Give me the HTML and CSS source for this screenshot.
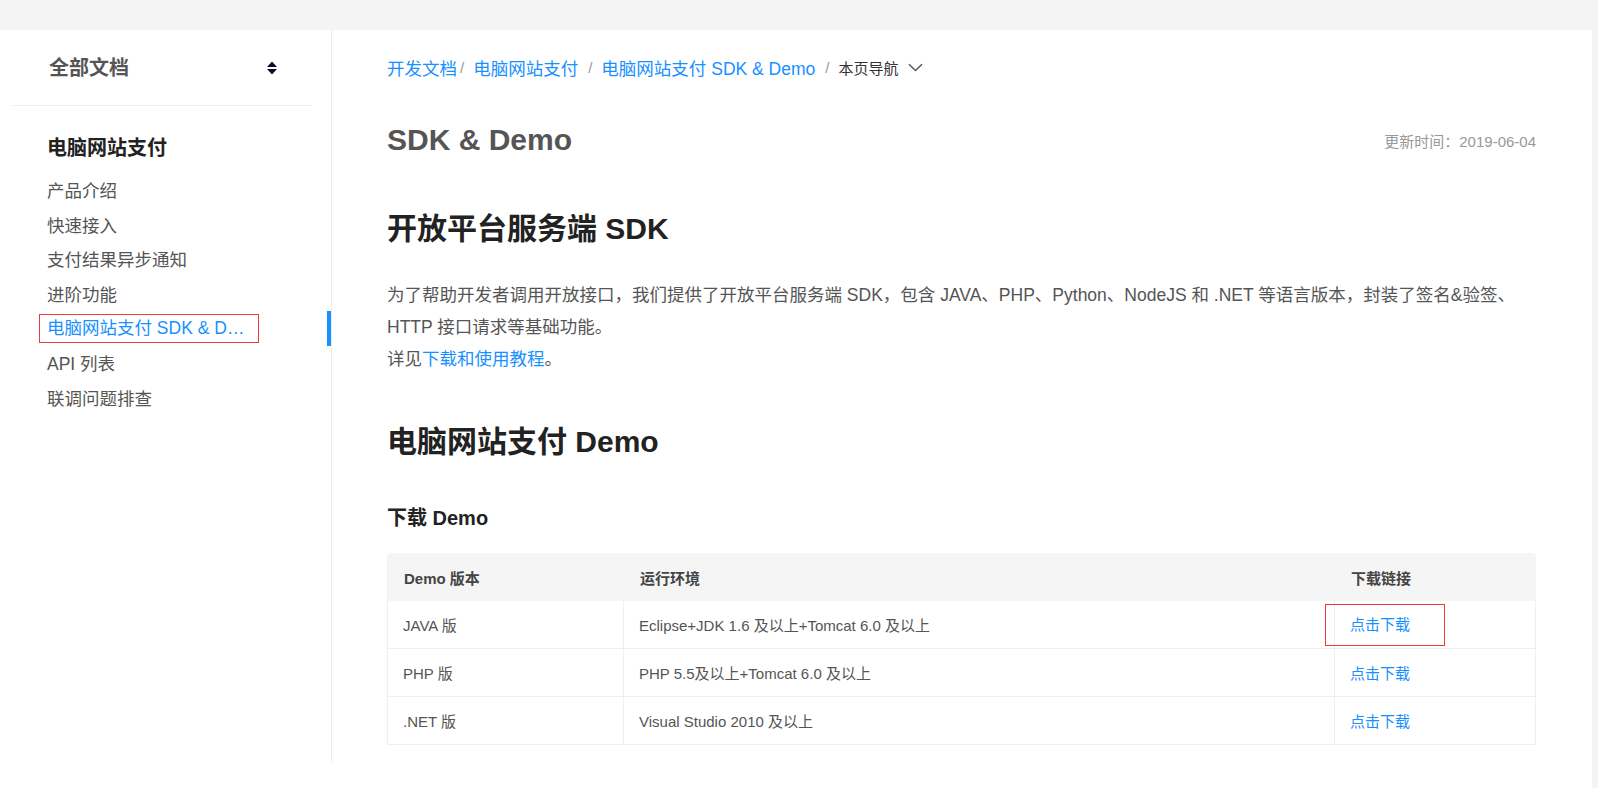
FILE: index.html
```html
<!DOCTYPE html>
<html lang="zh-CN">
<head>
<meta charset="utf-8">
<title>SDK &amp; Demo</title>
<link rel="stylesheet" href="styles.css">
</head>
<body>
<div class="page">
  <aside class="sidebar">
    <div class="side-head">
      <span class="side-head-title">全部文档</span>
      <svg class="sort-icon" width="10" height="14" viewBox="0 0 10 14"><polygon points="0,6 5,0.5 10,6" fill="#0d0d26"/><polygon points="0,8 10,8 5,13.5" fill="#0d0d26"/></svg>
    </div>
    <nav class="side-nav">
      <div class="side-group">电脑网站支付</div>
      <a class="side-item">产品介绍</a>
      <a class="side-item">快速接入</a>
      <a class="side-item">支付结果异步通知</a>
      <a class="side-item">进阶功能</a>
      <a class="side-item active"><span class="active-text">电脑网站支付 SDK &amp; Demo</span></a>
      <a class="side-item">API 列表</a>
      <a class="side-item">联调问题排查</a>
    </nav>
  </aside>
  <main class="content">
    <div class="crumbs">
      <a class="crumb-link">开发文档</a><span class="sep sep-first">/</span>
      <a class="crumb-link">电脑网站支付</a><span class="sep">/</span>
      <a class="crumb-link">电脑网站支付 SDK &amp; Demo</a><span class="sep">/</span>
      <span class="crumb-nav">本页导航</span>
      <svg class="chev" width="15" height="9" viewBox="0 0 15 9"><polyline points="1,1.2 7.5,7.6 14,1.2" fill="none" stroke="#555" stroke-width="1.4"/></svg>
    </div>
    <div class="title-row">
      <h1 class="page-title">SDK &amp; Demo</h1>
      <span class="updated">更新时间：2019-06-04</span>
    </div>
    <h2 class="sec-title first">开放平台服务端 SDK</h2>
    <p class="para">为了帮助开发者调用开放接口，我们提供了开放平台服务端 SDK，包含 JAVA、PHP、Python、NodeJS 和 .NET 等语言版本，封装了签名&amp;验签、HTTP 接口请求等基础功能。<br>详见<a class="link">下载和使用教程</a>。</p>
    <h2 class="sec-title second">电脑网站支付 Demo</h2>
    <h3 class="sub-title">下载 Demo</h3>
    <table class="demo-table">
      <thead>
        <tr><th class="c1">Demo 版本</th><th class="c2">运行环境</th><th class="c3">下载链接</th></tr>
      </thead>
      <tbody>
        <tr><td>JAVA 版</td><td>Eclipse+JDK 1.6 及以上+Tomcat 6.0 及以上</td><td><span class="annot"><a class="link">点击下载</a></span></td></tr>
        <tr><td>PHP 版</td><td>PHP 5.5及以上+Tomcat 6.0 及以上</td><td><a class="link">点击下载</a></td></tr>
        <tr><td>.NET 版</td><td>Visual Studio 2010 及以上</td><td><a class="link">点击下载</a></td></tr>
      </tbody>
    </table>
  </main>
</div>
</body>
</html>
```

FILE: styles.css
```css
* { box-sizing: border-box; }
html, body { margin: 0; padding: 0; }
body {
  background: #f4f4f4;
  font-family: "Liberation Sans", "Noto Sans CJK SC", sans-serif;
  color: #555;
  padding: 30px 6px 0 0;
  min-height: 788px;
}
.page {
  display: flex;
  align-items: flex-start;
  background: #fff;
  min-height: 758px;
}
.sidebar {
  width: 332px;
  flex: 0 0 332px;
  height: 732px;
  border-right: 1px solid #ececec;
}
.side-head {
  margin: 0 19px 0 12px;
  height: 76px;
  padding: 1px 35px 0 37px;
  border-bottom: 1px solid #efefef;
  display: flex;
  align-items: center;
  justify-content: space-between;
}
.side-head-title {
  font-size: 20px;
  font-weight: bold;
  color: #555;
  line-height: 28px;
}
.sort-icon { display: block; margin-top: -1px; }
.side-nav {
  padding-top: 27px;
  display: flex;
  flex-direction: column;
}
.side-group {
  padding-left: 47px;
  font-size: 20px;
  font-weight: bold;
  color: #222;
  line-height: 30px;
  margin-bottom: 9px;
}
.side-item {
  position: relative;
  display: flex;
  align-items: center;
  height: 34.7px;
  padding-left: 47px;
  font-size: 17.5px;
  color: #555;
  white-space: nowrap;
}
.side-item.active { color: #1890ff; }
.side-item.active::after {
  content: "";
  position: absolute;
  right: 0;
  top: 0;
  width: 4px;
  height: 35px;
  background: #1890ff;
}
.active-text {
  display: block;
  margin-left: -8px;
  width: 220px;
  height: 29px;
  line-height: 27px;
  padding: 0 12px 0 7px;
  border: 1px solid #ef3a3a;
  overflow: hidden;
  text-overflow: ellipsis;
  white-space: nowrap;
}
.content {
  flex: 1;
  padding: 25px 56px 40px 55px;
}
.crumbs {
  display: flex;
  align-items: center;
  height: 24px;
  font-size: 17.5px;
  white-space: nowrap;
}
.crumb-link { color: #1890ff; }
.sep { color: #999; margin: 0 9px 0 10px; font-size: 15px; }
.sep-first { margin-left: 3px; margin-right: 9px; }
.crumb-nav { font-size: 15px; color: #333; }
.chev { margin-left: 10px; margin-top: 1px; }
.title-row {
  margin-top: 41px;
  height: 40px;
  display: flex;
  align-items: center;
  justify-content: space-between;
}
.page-title {
  margin: 0;
  font-size: 30px;
  line-height: 40px;
  font-weight: bold;
  color: #555;
}
.updated { font-size: 15px; color: #999; }
.sec-title {
  margin: 0;
  font-size: 30px;
  line-height: 40px;
  font-weight: bold;
  color: #222;
}
.sec-title.first { margin-top: 49px; }
.sec-title.second { margin-top: 47px; }
.para {
  margin: 30px 0 0;
  font-size: 17.5px;
  line-height: 32px;
  color: #555;
}
.link { color: #1890ff; text-decoration: none; }
.sub-title {
  margin: 42px 0 0;
  font-size: 20px;
  line-height: 28px;
  font-weight: bold;
  color: #222;
}
.demo-table {
  margin-top: 21px;
  width: 100%;
  border-collapse: separate;
  border-spacing: 0;
  font-size: 15px;
  table-layout: fixed;
}
.demo-table th {
  height: 48px;
  background: #f5f5f5;
  text-align: left;
  font-weight: bold;
  color: #444;
  padding: 0 0 0 16px;
  border-left: 1px solid transparent;
}
.demo-table th.c1 { width: 236px; border-top-left-radius: 4px; }
.demo-table th.c2 { width: 711px; }
.demo-table th.c3 { border-top-right-radius: 4px; }
.demo-table td {
  height: 48px;
  padding: 0 0 0 15px;
  color: #555;
  border-left: 1px solid #efefef;
  border-bottom: 1px solid #efefef;
  white-space: nowrap;
}
.demo-table td:last-child { border-right: 1px solid #efefef; }
.annot {
  display: inline-block;
  vertical-align: middle;
  margin-left: -25px;
  margin-top: 1px;
  padding: 0 34px 0 24px;
  height: 42px;
  line-height: 40px;
  border: 1px solid #ef3a3a;
}
```
